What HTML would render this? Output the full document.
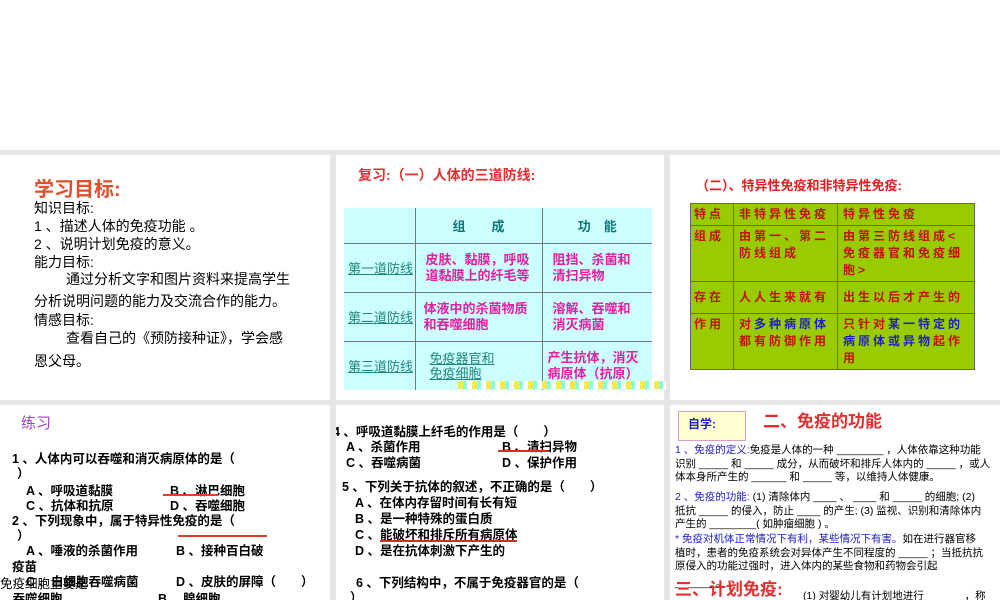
<!DOCTYPE html>
<html><head><meta charset="utf-8"><style>
*{margin:0;padding:0;box-sizing:border-box}
body{width:1000px;height:600px;position:relative;overflow:hidden;background:#fff;font-family:"Liberation Sans","Noto Sans CJK SC",sans-serif;color:#000}
.bg{position:absolute;left:0;top:150px;width:1000px;height:450px;background:#e6e6e6}
.p{position:absolute;background:#fff;overflow:hidden}
.a{position:absolute;white-space:nowrap}
table{border-collapse:collapse;position:absolute}
</style></head><body>
<div class="bg"></div>
<!-- panel 1 -->
<div class="p" style="left:0;top:155px;width:330px;height:245px">
 <div class="a" style="left:34px;top:18px;font-size:20px;font-weight:bold;color:#e0502a">学习目标:</div>
 <div class="a" style="left:34px;top:44px;font-size:14px;line-height:18px">知识目标:<br>1 、描述人体的免疫功能 。<br>2 、说明计划免疫的意义。<br>能力目标:</div>
 <div class="a" style="left:66px;top:114px;font-size:14px">通过分析文字和图片资料来提高学生</div>
 <div class="a" style="left:34px;top:136px;font-size:14px">分析说明问题的能力及交流合作的能力。</div>
 <div class="a" style="left:34px;top:155px;font-size:14px">情感目标:</div>
 <div class="a" style="left:66px;top:173px;font-size:14px">查看自己的《预防接种证》，学会感</div>
 <div class="a" style="left:34px;top:196px;font-size:14px">恩父母。</div>
</div>
<!-- panel 2 -->
<div class="p" style="left:336px;top:155px;width:328px;height:245px">
 <div class="a" style="left:22px;top:10px;font-size:14px;font-weight:bold;color:#e03030">复习:（一）人体的三道防线:</div>
</div>
<table style="left:344px;top:208px;width:308px;height:182px;background:#ccffff;font-size:13px;font-weight:bold">
<tr style="height:35px"><td style="width:71px;border-right:1px solid #777;border-bottom:1px solid #777"></td><td style="width:127px;text-align:center;color:#117777;border-right:1px solid #777;border-bottom:1px solid #777">组　　成</td><td style="text-align:center;color:#117777;border-bottom:1px solid #777">功　能</td></tr>
<tr style="height:49px"><td style="color:#228877;text-decoration:underline;font-weight:normal;border-right:1px solid #777;border-bottom:1px solid #777;padding-left:4px">第一道防线</td><td style="color:#e020a0;padding-left:10px;line-height:16px;border-right:1px solid #777;border-bottom:1px solid #777">皮肤、黏膜，呼吸<br>道黏膜上的纤毛等</td><td style="color:#e020a0;padding-left:10px;line-height:16px;border-bottom:1px solid #777">阻挡、杀菌和<br>清扫异物</td></tr>
<tr style="height:49px"><td style="color:#228877;text-decoration:underline;font-weight:normal;border-right:1px solid #777;border-bottom:1px solid #777;padding-left:4px">第二道防线</td><td style="color:#e020a0;padding-left:8px;line-height:16px;border-right:1px solid #777;border-bottom:1px solid #777">体液中的杀菌物质<br>和吞噬细胞</td><td style="color:#e020a0;padding-left:10px;line-height:16px;border-bottom:1px solid #777">溶解、吞噬和<br>消灭病菌</td></tr>
<tr style="height:49px"><td style="color:#228877;text-decoration:underline;font-weight:normal;border-right:1px solid #777;padding-left:4px">第三道防线</td><td style="color:#228877;text-decoration:underline;font-weight:normal;padding-left:14px;line-height:15px;border-right:1px solid #777">免疫器官和<br>免疫细胞</td><td style="color:#e020a0;padding-left:5px;line-height:16px">产生抗体，消灭<br>病原体（抗原）</td></tr>
</table>
<div class="a" style="left:458px;top:381px;width:208px;height:8px;background:repeating-linear-gradient(90deg,#ffe84a 0 5px,#8fd 5px 9px,#fff 9px 14px)"></div>
<!-- panel 3 -->
<div class="p" style="left:670px;top:155px;width:330px;height:245px">
 <div class="a" style="left:26px;top:20px;font-size:13px;font-weight:bold;color:#e02020">（二）、特异性免疫和非特异性免疫:</div>
</div>
<table style="left:690px;top:203px;width:285px;height:164px;background:#99cc00;font-size:12px;font-weight:bold;color:#c01010;letter-spacing:3px;line-height:17px;table-layout:fixed">
<tr style="height:22px"><td style="width:43px;border:1px solid #666;padding-left:3px">特点</td><td style="width:104px;border:1px solid #666;padding-left:5px">非特异性免疫</td><td style="border:1px solid #666;padding-left:5px">特异性免疫</td></tr>
<tr style="height:55px;vertical-align:top"><td style="border:1px solid #666;padding:2px 3px">组成</td><td style="border:1px solid #666;padding:2px 5px">由第一、第二防线组成</td><td style="border:1px solid #666;padding:2px 5px">由第三防线组成&lt;免疫器官和免疫细胞&gt;</td></tr>
<tr style="height:32px"><td style="border:1px solid #666;padding-left:3px">存在</td><td style="border:1px solid #666;padding-left:5px">人人生来就有</td><td style="border:1px solid #666;padding-left:5px">出生以后才产生的</td></tr>
<tr style="height:55px;vertical-align:top"><td style="border:1px solid #666;padding:2px 3px">作用</td><td style="border:1px solid #666;padding:2px 5px">对<span style="color:#2020c0">多种病原体</span>都有防御作用</td><td style="border:1px solid #666;padding:2px 5px">只针对<span style="color:#2020c0">某一特定的病原体或异物</span>起作用</td></tr>
</table>
<!-- panel 4 -->
<div class="p" style="left:0;top:405px;width:330px;height:195px;font-size:12.5px;font-weight:bold">
 <div class="a" style="left:21px;top:7px;font-size:15px;color:#a040c0;font-weight:normal">练习</div>
 <div class="a" style="left:12px;top:43px">1 、人体内可以吞噬和消灭病原体的是（</div>
 <div class="a" style="left:17px;top:58px">）</div>
 <div class="a" style="left:26px;top:75px">A 、呼吸道黏膜</div><div class="a" style="left:170px;top:75px">B 、淋巴细胞</div>
 <div class="a" style="left:163px;top:89px;width:55px;height:2px;background:#e04020"></div>
 <div class="a" style="left:26px;top:90px">C 、抗体和抗原</div><div class="a" style="left:170px;top:90px">D 、吞噬细胞</div>
 <div class="a" style="left:12px;top:105px">2 、下列现象中，属于特异性免疫的是（</div>
 <div class="a" style="left:17px;top:120px">）</div>
 <div class="a" style="left:178px;top:130px;width:89px;height:2px;background:#e04020"></div>
 <div class="a" style="left:26px;top:135px">A 、唾液的杀菌作用</div><div class="a" style="left:176px;top:135px">B 、接种百白破</div>
 <div class="a" style="left:12px;top:151px">疫苗</div>
 <div class="a" style="left:26px;top:166px">C 、白细胞吞噬病菌</div><div class="a" style="left:176px;top:166px">D 、皮肤的屏障（　　）</div>
 <div class="a" style="left:0px;top:168px;font-weight:normal">免疫细胞主要是</div>
 <div class="a" style="left:0px;top:183px">、吞噬细胞</div><div class="a" style="left:158px;top:183px">B 、腺细胞</div>
</div>
<!-- panel 5 -->
<div class="p" style="left:336px;top:405px;width:328px;height:195px;font-size:12.5px;font-weight:bold">
 <div class="a" style="left:-3px;top:16px">4 、呼吸道黏膜上纤毛的作用是（　　）</div>
 <div class="a" style="left:10px;top:31px">A 、杀菌作用</div><div class="a" style="left:166px;top:31px">B 、清扫异物</div>
 <div class="a" style="left:162px;top:45px;width:50px;height:2px;background:#d03020"></div>
 <div class="a" style="left:10px;top:47px">C 、吞噬病菌</div><div class="a" style="left:166px;top:47px">D 、保护作用</div>
 <div class="a" style="left:6px;top:71px">5 、下列关于抗体的叙述，不正确的是（　　）</div>
 <div class="a" style="left:19px;top:87px">A 、在体内存留时间有长有短</div>
 <div class="a" style="left:19px;top:103px">B 、是一种特殊的蛋白质</div>
 <div class="a" style="left:19px;top:119px">C 、能破坏和排斥所有病原体</div>
 <div class="a" style="left:44px;top:135px;width:137px;height:2px;background:#d03020"></div>
 <div class="a" style="left:19px;top:135px">D 、是在抗体刺激下产生的</div>
 <div class="a" style="left:20px;top:167px">6 、下列结构中，不属于免疫器官的是（</div>
 <div class="a" style="left:14px;top:182px">）</div>
</div>
<!-- panel 6 -->
<div class="p" style="left:670px;top:405px;width:330px;height:195px;font-size:10.5px;line-height:13.5px">
 <div class="a" style="left:8px;top:6px;width:68px;height:30px;background:#ffffd0;border:1px solid #d8a0c0"></div>
 <div class="a" style="left:18px;top:13px;font-size:12px;font-weight:bold;color:#2020c0">自学:</div>
 <div class="a" style="left:93px;top:10px;font-size:17px;font-weight:bold;color:#e03030">二、免疫的功能</div>
 <div class="a" style="left:5px;top:39px"><span style="color:#2020c0">1 、免疫的定义:</span>免疫是人体的一种 ________ ，人体依靠这种功能<br>识别 _____ 和 _____ 成分，从而破坏和排斥人体内的 _____ ，或人<br>体本身所产生的 ______ 和 _____ 等，以维持人体健康。</div>
 <div class="a" style="left:5px;top:86px"><span style="color:#2020c0">2 、免疫的功能:</span> (1) 清除体内 ____ 、 ____ 和 _____ 的细胞; (2)<br>抵抗 _____ 的侵入，防止 ____ 的产生; (3) 监视、识别和清除体内<br>产生的 ________( 如肿瘤细胞 ) 。</div>
 <div class="a" style="left:5px;top:128px"><span style="color:#2020c0">* 免疫对机体正常情况下有利，某些情况下有害。</span>如在进行器官移<br>植时，患者的免疫系统会对异体产生不同程度的 _____ ；当抵抗抗<br>原侵入的功能过强时，进入体内的某些食物和药物会引起</div>
 <div class="a" style="left:5px;top:172px">_______。</div>
 <div class="a" style="left:5px;top:178px;font-size:17px;font-weight:bold;color:#e03030">三、计划免疫:</div>
 <div class="a" style="left:133px;top:185px">(1) 对婴幼儿有计划地进行 ______ ，称</div>
</div>
</body></html>
